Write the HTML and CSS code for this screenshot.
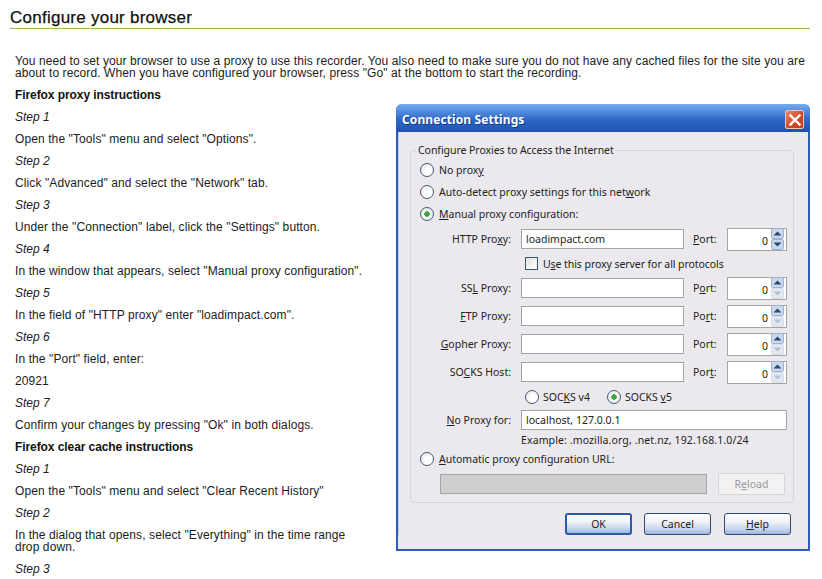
FILE: index.html
```html
<!DOCTYPE html>
<html lang="en">
<head>
<meta charset="utf-8">
<title>Configure your browser</title>
<link rel="stylesheet" href="styles.css">
</head>
<body>
<svg class="defs" width="0" height="0" aria-hidden="true">
  <symbol id="spin-up" viewBox="0 0 13 11">
    <rect x=".5" y=".5" width="12" height="10" rx="1.5" fill="#c9d8ee" stroke="#9db3d2"/>
    <path d="M2.5 7.5 6.5 3.5l4 4z" fill="#33465f"/>
  </symbol>
  <symbol id="spin-down" viewBox="0 0 13 11">
    <rect x=".5" y=".5" width="12" height="10" rx="1.5" fill="#c9d8ee" stroke="#9db3d2"/>
    <path d="M2.5 3.5h8l-4 4z" fill="#33465f"/>
  </symbol>
  <symbol id="spin-off" viewBox="0 0 13 11">
    <rect x=".5" y=".5" width="12" height="10" rx="1.5" fill="#e3e9f2" stroke="#d5dde9"/>
    <path d="M2.5 3.5h8l-4 4z" fill="#b4c3d8"/>
  </symbol>
</svg>
<h1 class="title">Configure your browser</h1>
<main class="content">
  <p class="para">You need to set your browser to use a proxy to use this recorder. You also need to make sure you do not have any cached files for the site you are about to record. When you have configured your browser, press "Go" at the bottom to start the recording.</p>

  <aside class="dialog">
    <header class="titlebar">
      <span class="titlebar-text">Connection Settings</span>
      <span class="close">
        <svg width="14" height="14" viewBox="0 0 14 14"><path d="M2.5 2.5l9 9M11.5 2.5l-9 9" stroke="#fff" stroke-width="2.4" stroke-linecap="square"/></svg>
      </span>
    </header>
    <div class="dialog-body">
      <fieldset class="group">
        <legend class="group-title">Configure Proxies to Access the Internet</legend>
        <div class="radio-row"><span class="radio"></span><span>No prox<u>y</u></span></div>
        <div class="radio-row"><span class="radio"></span><span>Auto-detect proxy settings for this net<u>w</u>ork</span></div>
        <div class="radio-row"><span class="radio on"></span><span><u>M</u>anual proxy configuration:</span></div>

        <div class="proxy-row">
          <label class="proxy-label">HTTP Pro<u>x</u>y:</label>
          <input class="field host" type="text" value="loadimpact.com">
          <label class="port-label"><u>P</u>ort:</label>
          <div class="spin"><span class="spin-value">0</span><span class="spin-btns"><svg width="13" height="11"><use href="#spin-up"/></svg><svg width="13" height="11"><use href="#spin-down"/></svg></span></div>
        </div>
        <div class="check-row"><span class="check"></span><span>U<u>s</u>e this proxy server for all protocols</span></div>
        <div class="proxy-row">
          <label class="proxy-label">SS<u>L</u> Proxy:</label>
          <input class="field host" type="text">
          <label class="port-label">P<u>o</u>rt:</label>
          <div class="spin"><span class="spin-value">0</span><span class="spin-btns"><svg width="13" height="11"><use href="#spin-up"/></svg><svg width="13" height="11"><use href="#spin-off"/></svg></span></div>
        </div>
        <div class="proxy-row">
          <label class="proxy-label"><u>F</u>TP Proxy:</label>
          <input class="field host" type="text">
          <label class="port-label">Po<u>r</u>t:</label>
          <div class="spin"><span class="spin-value">0</span><span class="spin-btns"><svg width="13" height="11"><use href="#spin-up"/></svg><svg width="13" height="11"><use href="#spin-off"/></svg></span></div>
        </div>
        <div class="proxy-row">
          <label class="proxy-label"><u>G</u>opher Proxy:</label>
          <input class="field host" type="text">
          <label class="port-label">Port:</label>
          <div class="spin"><span class="spin-value">0</span><span class="spin-btns"><svg width="13" height="11"><use href="#spin-up"/></svg><svg width="13" height="11"><use href="#spin-off"/></svg></span></div>
        </div>
        <div class="proxy-row">
          <label class="proxy-label">SO<u>C</u>KS Host:</label>
          <input class="field host" type="text">
          <label class="port-label">Por<u>t</u>:</label>
          <div class="spin"><span class="spin-value">0</span><span class="spin-btns"><svg width="13" height="11"><use href="#spin-up"/></svg><svg width="13" height="11"><use href="#spin-off"/></svg></span></div>
        </div>
        <div class="socks-row">
          <span class="radio"></span><span class="socks-v4">SOC<u>K</u>S v4</span>
          <span class="radio on"></span><span>SOCKS <u>v</u>5</span>
        </div>
        <div class="noproxy-row">
          <label class="proxy-label"><u>N</u>o Proxy for:</label>
          <input class="field wide" type="text" value="localhost, 127.0.0.1">
        </div>
        <div class="example">Example: .mozilla.org, .net.nz, 192.168.1.0/24</div>
        <div class="radio-row"><span class="radio"></span><span><u>A</u>utomatic proxy configuration URL:</span></div>
        <div class="auto-row">
          <div class="field-off"></div>
          <div class="reload">R<u>e</u>load</div>
        </div>
      </fieldset>
      <footer class="actions">
        <button class="btn default" type="button">OK</button>
        <button class="btn" type="button">Cancel</button>
        <button class="btn" type="button"><u>H</u>elp</button>
      </footer>
    </div>
  </aside>

  <p class="para strong">Firefox proxy instructions</p>
  <p class="para step">Step 1</p>
  <p class="para">Open the "Tools" menu and select "Options".</p>
  <p class="para step">Step 2</p>
  <p class="para">Click "Advanced" and select the "Network" tab.</p>
  <p class="para step">Step 3</p>
  <p class="para">Under the "Connection" label, click the "Settings" button.</p>
  <p class="para step">Step 4</p>
  <p class="para">In the window that appears, select "Manual proxy configuration".</p>
  <p class="para step">Step 5</p>
  <p class="para">In the field of "HTTP proxy" enter "loadimpact.com".</p>
  <p class="para step">Step 6</p>
  <p class="para">In the "Port" field, enter:</p>
  <p class="para">20921</p>
  <p class="para step">Step 7</p>
  <p class="para">Confirm your changes by pressing "Ok" in both dialogs.</p>
  <p class="para strong">Firefox clear cache instructions</p>
  <p class="para step">Step 1</p>
  <p class="para">Open the "Tools" menu and select "Clear Recent History"</p>
  <p class="para step">Step 2</p>
  <p class="para">In the dialog that opens, select "Everything" in the time range drop down.</p>
  <p class="para step">Step 3</p>
</main>
</body>
</html>
```
FILE: styles.css
```css
html, body {
  margin: 0;
  height: 579px;
  overflow: hidden;
  background: #fff;
}
body {
  font-family: "Liberation Sans", Arial, sans-serif;
  font-size: 12px;
  line-height: 12px;
  color: #1c1c1c;
}
.defs { position: absolute; }
.title {
  margin: 0 12px 0 10px;
  height: 29px;
  box-sizing: border-box;
  padding-top: 9px;
  border-bottom: 1px solid #a3b35c;
  font-size: 17px;
  line-height: 18px;
  font-weight: 400;
  letter-spacing: .25px;
  color: #111;
  -webkit-text-stroke: .25px #111;
}
.content { padding: 26px 15px 0; }
.para { margin: 0 0 10px; letter-spacing: .1px; }
.strong { font-weight: 700; color: #111; letter-spacing: -.08px; }
.step { font-style: italic; letter-spacing: 0; }

.dialog {
  float: right;
  box-sizing: border-box;
  width: 414px;
  height: 447px;
  margin: 15px -3px 20px 28px;
  border: 2px solid #2d5db4;
  border-top: 0;
  border-radius: 6px 6px 0 0;
  background: #ebe9ed;
  font-family: "Noto Sans", Tahoma, sans-serif;
  font-size: 10.5px;
  line-height: 14px;
  color: #222;
}
.titlebar {
  display: flex;
  align-items: center;
  justify-content: space-between;
  height: 28px;
  margin: 0 -2px;
  padding: 3px 6px 0;
  box-sizing: border-box;
  border-radius: 6px 6px 0 0;
  background: linear-gradient(#79acec 0, #5791e1 22%, #2f69c9 55%, #1f52ad 100%);
}
.titlebar-text {
  font-family: "Noto Sans", Tahoma, sans-serif;
  font-weight: 700;
  font-size: 12px;
  letter-spacing: .1px;
  color: #fff;
  text-shadow: 1px 1px 0 #143a85;
}
.close {
  display: flex;
  align-items: center;
  justify-content: center;
  width: 19px;
  height: 19px;
  border-radius: 2px;
  border: 1px solid #f0c4b0;
  box-sizing: border-box;
  background: linear-gradient(135deg, #e98b6f, #d2492a 55%, #c8391d);
}
.dialog-body {
  padding: 11px 14px 0 11px;
  border-left: 1px solid #b9cdea;
}
.group {
  box-sizing: border-box;
  width: 384px;
  height: 360px;
  margin: 0;
  padding: 0;
  border: 1px solid #d6d5cf;
  border-radius: 4px;
  min-width: 0;
}
.group-title {
  margin-left: 5px;
  padding: 0 2px;
  line-height: 14px;
  letter-spacing: -.05px;
}
.radio-row, .check-row, .socks-row {
  display: flex;
  align-items: center;
}
.radio-row { height: 22px; padding-left: 9px; gap: 5px; }
.radio-row:first-of-type { margin-top: 2px; }
.radio {
  flex: none;
  box-sizing: border-box;
  width: 14px;
  height: 14px;
  border-radius: 50%;
  border: 1px solid #45596e;
  background: radial-gradient(circle at 65% 65%, #fff 30%, #dfe6ec 90%);
}
.radio.on {
  background: radial-gradient(circle, #3da43d 0 2.5px, #f6f8f8 3px, #dfe6ec 100%);
}
.proxy-row, .noproxy-row {
  display: flex;
  align-items: center;
}
.proxy-row { height: 28px; }
.noproxy-row { height: 24px; }
.proxy-label {
  box-sizing: border-box;
  flex: none;
  width: 100px;
  margin-right: 10px;
  text-align: right;
}
.field {
  flex: none;
  box-sizing: border-box;
  height: 20px;
  padding: 0 4px;
  border: 1px solid #a5a5a2;
  border-radius: 0;
  outline: 0;
  background: #fff;
  font: inherit;
  color: #222;
}
.host { width: 163px; }
.wide { width: 266px; }
.port-label { flex: none; width: 34px; margin-left: 9px; }
.spin {
  flex: none;
  box-sizing: border-box;
  display: flex;
  align-items: center;
  justify-content: flex-end;
  gap: 3px;
  width: 60px;
  height: 23px;
  padding-right: 2px;
  border: 1px solid #a5a5a2;
  background: #fff;
}
.spin-value { line-height: 14px; padding-top: 3px; }
.spin-btns { display: flex; flex-direction: column; }
.spin-btns svg { display: block; }
.check-row { height: 21px; padding-left: 114px; gap: 5px; letter-spacing: -.07px; }
.check {
  box-sizing: border-box;
  width: 13px;
  height: 13px;
  border: 1px solid #3c5670;
  background: linear-gradient(135deg, #e4e3dc, #fff);
}
.socks-row { height: 22px; padding-left: 114px; gap: 4px; }
.socks-v4 { width: 60px; }
.example { height: 16px; line-height: 16px; padding-left: 110px; letter-spacing: .12px; }
.auto-row {
  display: flex;
  align-items: center;
  height: 28px;
  padding-left: 29px;
  gap: 11px;
}
.field-off {
  box-sizing: border-box;
  width: 267px;
  height: 20px;
  border: 1px solid #a5a5a2;
  background: #cfcfcf;
}
.reload {
  box-sizing: border-box;
  width: 67px;
  height: 22px;
  margin-top: -1px;
  border: 1px solid #d6d5cf;
  border-radius: 2px;
  background: #f2f1f3;
  color: #9a9a98;
  text-align: center;
  line-height: 20px;
}
.actions {
  display: flex;
  justify-content: flex-end;
  gap: 13px;
  margin-top: 10px;
  padding-right: 3px;
}
.btn {
  box-sizing: border-box;
  width: 67px;
  height: 22px;
  padding: 0;
  border: 1px solid #304a6e;
  border-radius: 3px;
  background: linear-gradient(#fff 0, #f3f5fa 35%, #c6d5ee 75%, #9db7e0 100%);
  font: inherit;
  color: #222;
}
.btn.default {
  margin-right: -1px;
  border: 2px solid #2c5aa5;
}
```
